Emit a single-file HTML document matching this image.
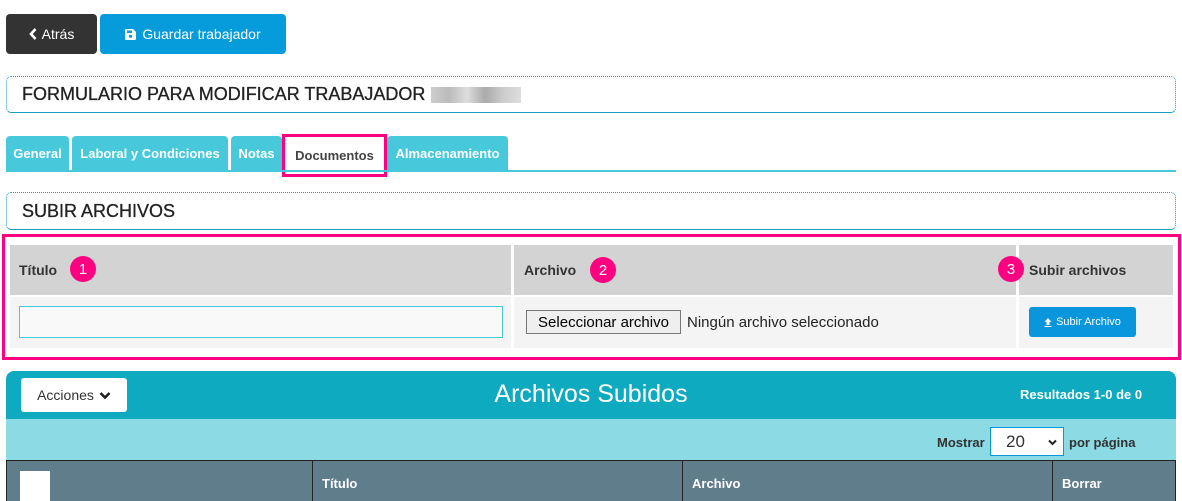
<!DOCTYPE html>
<html><head><meta charset="utf-8"><style>
*{box-sizing:border-box;margin:0;padding:0}
body{width:1182px;height:501px;overflow:hidden;background:#fff;font-family:"Liberation Sans",sans-serif;position:relative;color:#333}
.a{position:absolute}
.btn{position:absolute;border-radius:4px;color:#fff;font-size:14px;display:flex;align-items:center;justify-content:center}
.box{position:absolute;left:6px;width:1170px;border:1px dotted #1a9bc4;border-bottom:1px solid #1a9bc4;border-radius:5px;font-size:18px;color:#222;padding-left:15px;display:flex;align-items:center;-webkit-text-stroke:0.3px #222}
.tab{position:absolute;top:136px;height:35px;background:#48c9db;color:#fff;font-weight:bold;font-size:13px;display:flex;align-items:center;justify-content:center;border-radius:4px 4px 0 0}
.badge{position:absolute;width:26px;height:26px;border-radius:50%;background:#ff0080;color:#fff;font-size:15px;display:flex;align-items:center;justify-content:center}
.th{position:absolute;top:460px;height:41px;color:#fff;font-weight:bold;font-size:13px;padding-left:9px;padding-top:6px;display:flex;align-items:center;border-left:1px solid #222}
</style></head><body>
<div class="btn" style="left:6px;top:14px;width:91px;height:40px;background:#333"><svg width="8" height="12" viewBox="0 0 8 12" style="margin-right:5px"><path d="M6.5 1L2 6l4.5 5" stroke="#fff" stroke-width="2.6" fill="none"/></svg>Atrás</div>
<div class="btn" style="left:100px;top:14px;width:186px;height:40px;background:#069bdb"><svg width="11" height="11" viewBox="0 0 11 11" style="margin-right:6px"><path d="M0 1a1 1 0 0 1 1-1h7l3 3v7a1 1 0 0 1-1 1H1a1 1 0 0 1-1-1z" fill="#fff"/><rect x="2" y="1.5" width="5" height="2.5" fill="#069bdb"/><circle cx="5.5" cy="7.3" r="1.6" fill="#069bdb"/></svg>Guardar trabajador</div>

<div class="box" style="top:76px;height:37px">FORMULARIO PARA MODIFICAR TRABAJADOR <span style="display:inline-block;width:90px;height:16px;margin-left:6px;background:linear-gradient(90deg,#ccc,#bbb,#ddd,#aaa,#ccc,#ddd)"></span></div>

<div class="tab" style="left:6px;width:63px">General</div>
<div class="tab" style="left:72px;width:156px">Laboral y Condiciones</div>
<div class="tab" style="left:231px;width:51px">Notas</div>
<div class="a" style="left:282px;top:134px;width:105px;height:43px;border:3px solid #ff0080;background:#fff;color:#444;font-weight:bold;font-size:13px;display:flex;align-items:center;justify-content:center">Documentos</div>
<div class="tab" style="left:387px;width:121px">Almacenamiento</div>
<div class="a" style="left:6px;top:170px;width:1170px;height:2px;background:#48c9db"></div>

<div class="box" style="top:192px;height:38px">SUBIR ARCHIVOS</div>

<div class="a" style="left:2px;top:234px;width:1179px;height:126px;border:3px solid #ff0080"></div>
<div class="a" style="left:10px;top:245px;width:501px;height:50px;background:#d3d3d3"></div>
<div class="a" style="left:514px;top:245px;width:502px;height:50px;background:#d3d3d3"></div>
<div class="a" style="left:1019px;top:245px;width:154px;height:50px;background:#d3d3d3"></div>
<div class="a" style="left:10px;top:297px;width:501px;height:51px;background:#f4f4f4"></div>
<div class="a" style="left:514px;top:297px;width:502px;height:51px;background:#f4f4f4"></div>
<div class="a" style="left:1019px;top:297px;width:154px;height:51px;background:#f4f4f4"></div>
<div class="a" style="left:19px;top:262px;font-weight:bold;font-size:14px">Título</div>
<div class="a" style="left:524px;top:262px;font-weight:bold;font-size:14px">Archivo</div>
<div class="a" style="left:1029px;top:262px;font-weight:bold;font-size:14px">Subir archivos</div>
<div class="badge" style="left:70px;top:256px">1</div>
<div class="badge" style="left:590px;top:257px">2</div>
<div class="badge" style="left:998px;top:256px">3</div>
<div class="a" style="left:19px;top:306px;width:484px;height:32px;border:1px solid #48c9db;background:#f9f9f9"></div>
<div class="a" style="left:526px;top:310px;width:155px;height:24px;border:1px solid #777;background:#efefef;font-size:15px;color:#000;display:flex;align-items:center;justify-content:center">Seleccionar archivo</div>
<div class="a" style="left:687px;top:314px;font-size:15px;color:#222">Ningún archivo seleccionado</div>
<div class="btn" style="left:1029px;top:307px;width:107px;height:30px;background:#0a96dc;font-size:11px;border-radius:3px"><svg width="8" height="9" viewBox="0 0 8 9" style="margin-right:4px"><path d="M4 0L0.5 4H2.5V7H5.5V4H7.5z M0.5 8H7.5V9H0.5z" fill="#fff"/></svg>Subir Archivo</div>

<div class="a" style="left:6px;top:371px;width:1170px;height:48px;background:#0eaac0;border-radius:8px 8px 0 0"></div>
<div class="a" style="left:21px;top:378px;width:106px;height:34px;background:#fff;border-radius:3px;font-size:14px;display:flex;align-items:center;justify-content:center">Acciones<svg width="12" height="9" viewBox="0 0 12 9" style="margin-left:5px"><path d="M1.5 2l4.5 4.5L10.5 2" stroke="#222" stroke-width="2.6" fill="none"/></svg></div>
<div class="a" style="left:0;width:1182px;top:380px;text-align:center;color:#fff;font-size:25px">Archivos Subidos</div>
<div class="a" style="left:1020px;top:387px;color:#fff;font-weight:bold;font-size:13px">Resultados 1-0 de 0</div>
<div class="a" style="left:6px;top:419px;width:1170px;height:41px;background:#8cdae4"></div>
<div class="a" style="left:937px;top:435px;font-weight:bold;font-size:13px">Mostrar</div>
<div class="a" style="left:990px;top:427px;width:74px;height:29px;background:#fff;border:1px solid #0a96dc;font-size:17px;padding-left:15px;display:flex;align-items:center">20<svg width="9" height="7" viewBox="0 0 9 7" style="position:absolute;right:6px;top:11px"><path d="M1 1.5l3.5 3.5L8 1.5" stroke="#222" stroke-width="2" fill="none"/></svg></div>
<div class="a" style="left:1069px;top:435px;font-weight:bold;font-size:13px">por página</div>
<div class="a" style="left:6px;top:460px;width:1170px;height:41px;background:#607d8b;border:1px solid #222;border-bottom:none"></div>
<div class="a" style="left:20px;top:471px;width:30px;height:30px;background:#fff"></div>
<div class="th" style="left:312px;width:370px">Título</div>
<div class="th" style="left:682px;width:370px">Archivo</div>
<div class="th" style="left:1052px;width:123px">Borrar</div>
</body></html>
